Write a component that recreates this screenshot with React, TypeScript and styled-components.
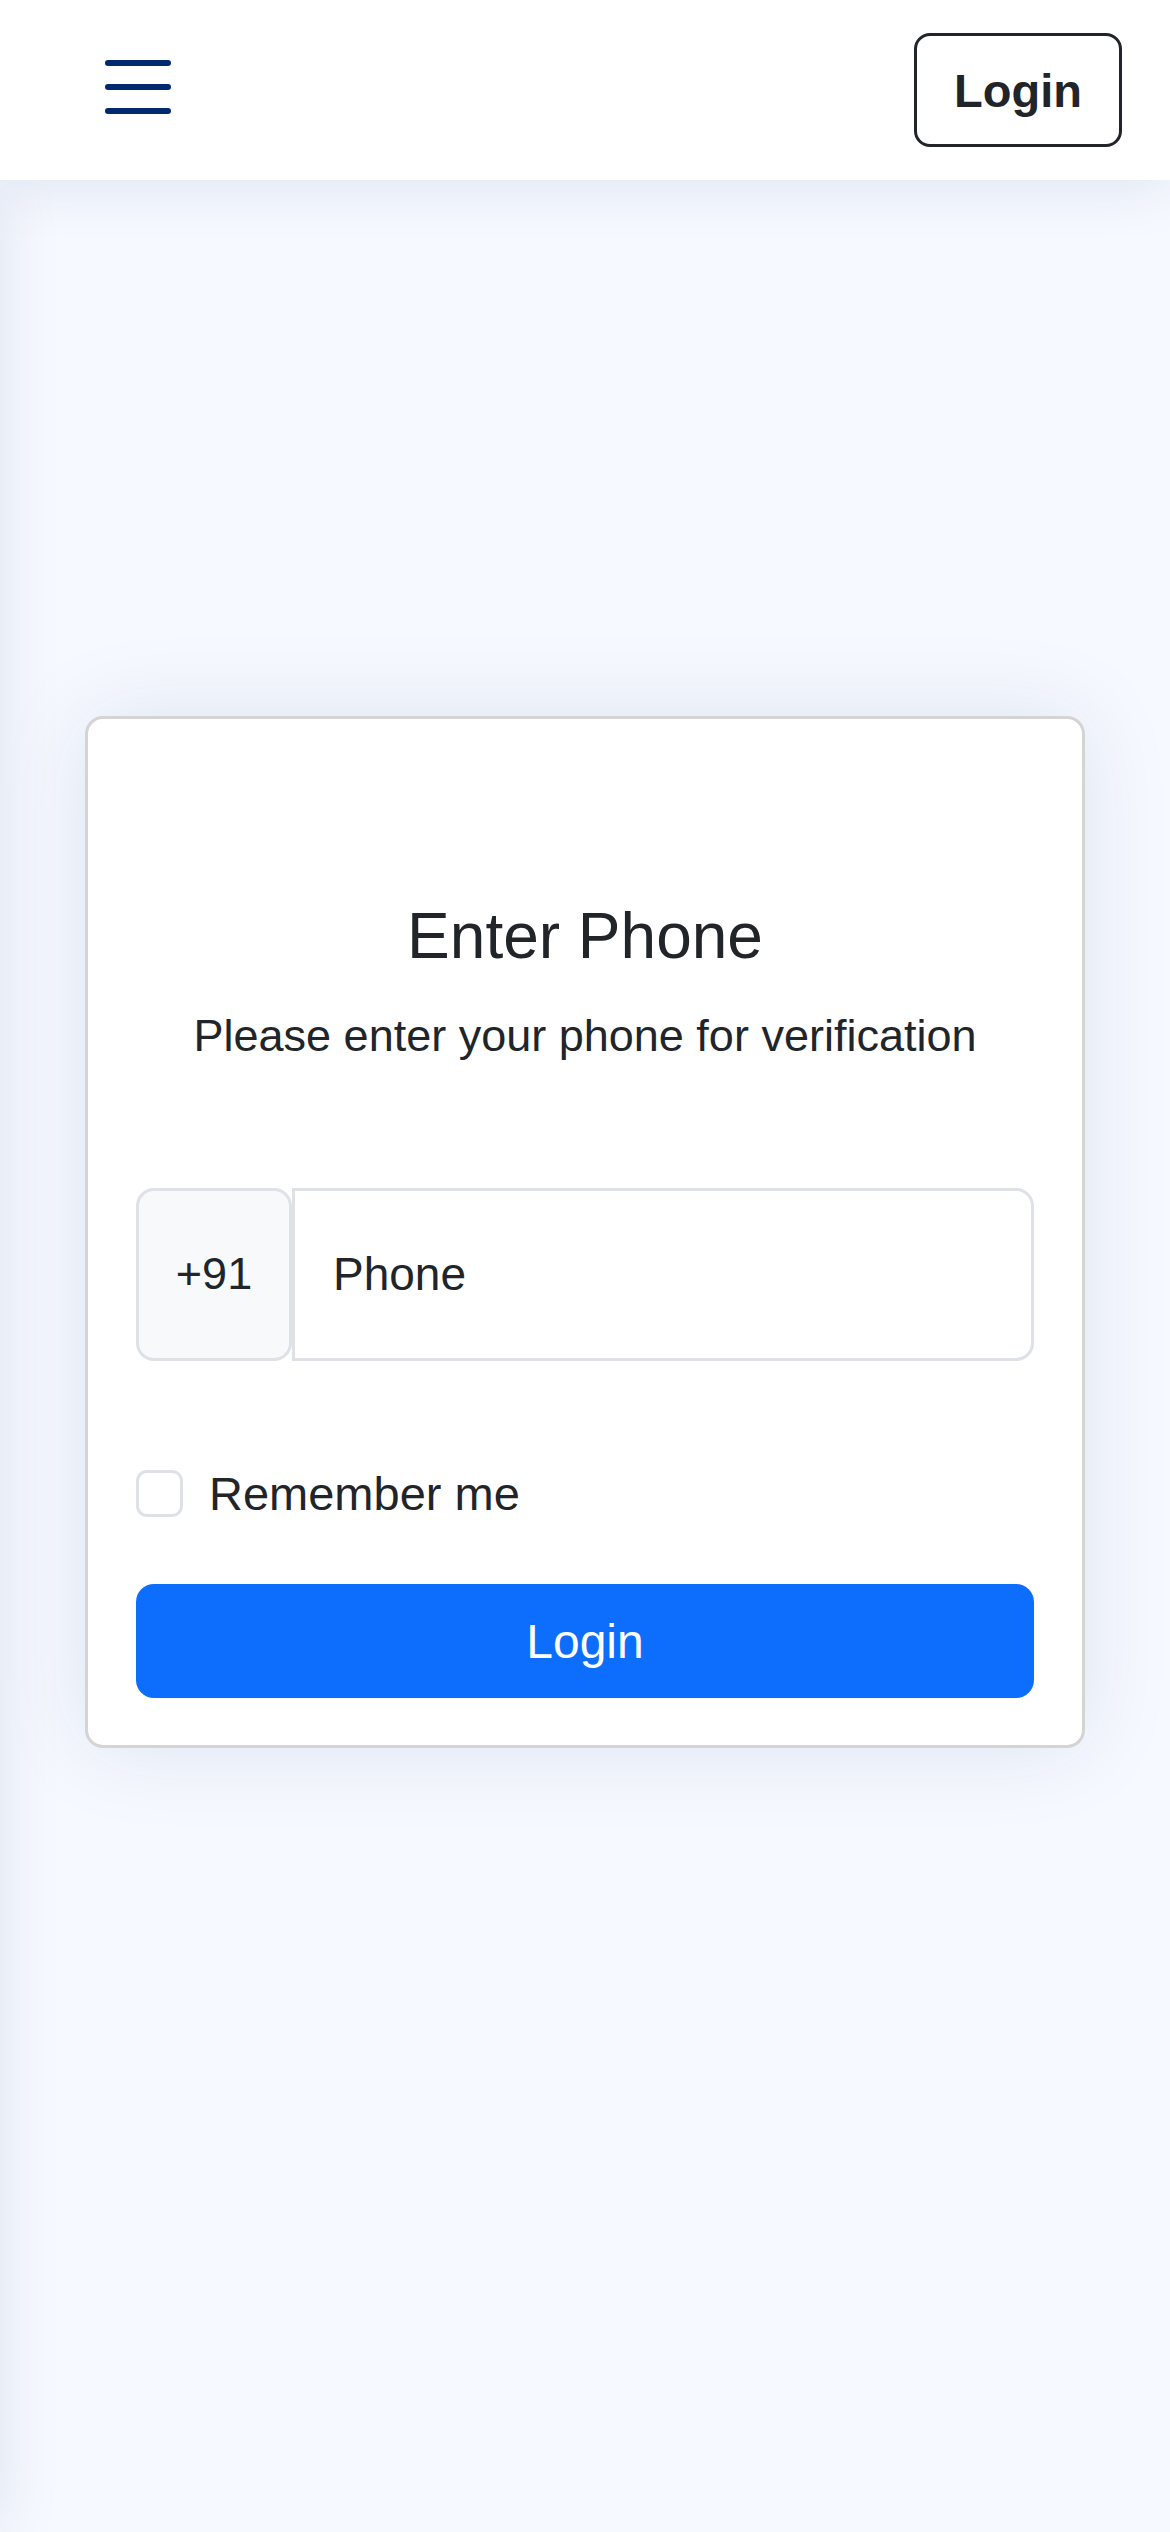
import React from "react";
import styled, { createGlobalStyle } from "styled-components";

const GlobalStyle = createGlobalStyle`
  * { box-sizing: border-box; }
  html, body { margin: 0; padding: 0; }
  body {
    background: #f6f9ff;
    color: #212529;
    font-family: "Liberation Sans", Arial, Helvetica, sans-serif;
    min-height: 100vh;
  }
`;

const Header = styled.header`
  position: relative;
  z-index: 3;
  height: 180px;
  background: #ffffff;
  box-shadow: 0 6px 60px rgba(1, 41, 112, 0.1);
  display: flex;
  align-items: center;
  justify-content: space-between;
  padding: 0 48px 0 90px;
`;

const MenuButton = styled.button`
  width: 96px;
  height: 96px;
  margin-bottom: 6px;
  padding: 0;
  border: none;
  background: transparent;
  color: #012970;
  display: flex;
  cursor: pointer;
  svg { width: 96px; height: 96px; display: block; }
`;

const HeaderLogin = styled.button`
  height: 114px;
  padding: 0 37px;
  border: 3px solid #212529;
  border-radius: 16px;
  background: #ffffff;
  color: #212529;
  font-family: inherit;
  font-size: 47px;
  font-weight: 700;
  cursor: pointer;
`;

const SidebarShadow = styled.aside`
  position: fixed;
  top: 180px;
  bottom: 0;
  left: -900px;
  width: 900px;
  background: #ffffff;
  box-shadow: 0 0 60px rgba(1, 41, 112, 0.1);
  z-index: 2;
`;

const Main = styled.main`
  padding: 536px 85px 200px;
`;

const Card = styled.section`
  background: #ffffff;
  border: 3px solid #d4d4d4;
  border-radius: 18px;
  box-shadow: 0 0 90px rgba(1, 41, 112, 0.1);
  padding: 179px 48px 47px;
  display: flex;
  flex-direction: column;
`;

const Title = styled.h1`
  margin: 0;
  font-size: 64px;
  font-weight: 400;
  line-height: 1.2;
  text-align: center;
  color: #212529;
`;

const Subtitle = styled.p`
  margin: 34px 0 0;
  font-size: 45px;
  line-height: 1.2;
  text-align: center;
  color: #212529;
`;

const InputGroup = styled.div`
  margin-top: 125px;
  height: 173px;
  display: flex;
`;

const Prefix = styled.span`
  width: 156px;
  flex: none;
  display: flex;
  align-items: center;
  justify-content: center;
  background: #f8f9fa;
  border: 3px solid #dee2e6;
  border-radius: 18px;
  font-size: 45px;
  color: #212529;
`;

const PhoneInput = styled.input`
  flex: 1;
  min-width: 0;
  border: 3px solid #dee2e6;
  border-radius: 0 18px 18px 0;
  padding: 0 0 0 38px;
  font-family: inherit;
  font-size: 46px;
  color: #212529;
  background: #ffffff;
  outline: none;
  &::placeholder { color: #212529; opacity: 1; }
`;

const CheckRow = styled.label`
  margin-top: 105px;
  display: flex;
  align-items: center;
  gap: 26px;
  font-size: 47px;
  line-height: 1.2;
  color: #212529;
`;

const CheckBox = styled.input`
  appearance: none;
  -webkit-appearance: none;
  margin: 0;
  width: 47px;
  height: 47px;
  border: 3px solid #dee2e6;
  border-radius: 11px;
  background: #ffffff;
  flex: none;
`;

const SubmitButton = styled.button`
  margin-top: 62px;
  height: 114px;
  width: 100%;
  border: none;
  border-radius: 18px;
  background: #0d6efd;
  color: #ffffff;
  font-family: inherit;
  font-size: 48px;
  cursor: pointer;
`;

export default function App() {
  return (
    <>
      <GlobalStyle />
      <Header>
        <MenuButton aria-label="Toggle sidebar">
          <svg viewBox="0 0 16 16" fill="currentColor">
            <path d="M2.5 12a.5.5 0 0 1 .5-.5h10a.5.5 0 0 1 0 1H3a.5.5 0 0 1-.5-.5m0-4a.5.5 0 0 1 .5-.5h10a.5.5 0 0 1 0 1H3a.5.5 0 0 1-.5-.5m0-4a.5.5 0 0 1 .5-.5h10a.5.5 0 0 1 0 1H3a.5.5 0 0 1-.5-.5" />
          </svg>
        </MenuButton>
        <HeaderLogin>Login</HeaderLogin>
      </Header>
      <SidebarShadow />
      <Main>
        <Card>
          <Title>Enter Phone</Title>
          <Subtitle>Please enter your phone for verification</Subtitle>
          <InputGroup>
            <Prefix>+91</Prefix>
            <PhoneInput type="tel" placeholder="Phone" />
          </InputGroup>
          <CheckRow>
            <CheckBox type="checkbox" />
            Remember me
          </CheckRow>
          <SubmitButton>Login</SubmitButton>
        </Card>
      </Main>
    </>
  );
}
